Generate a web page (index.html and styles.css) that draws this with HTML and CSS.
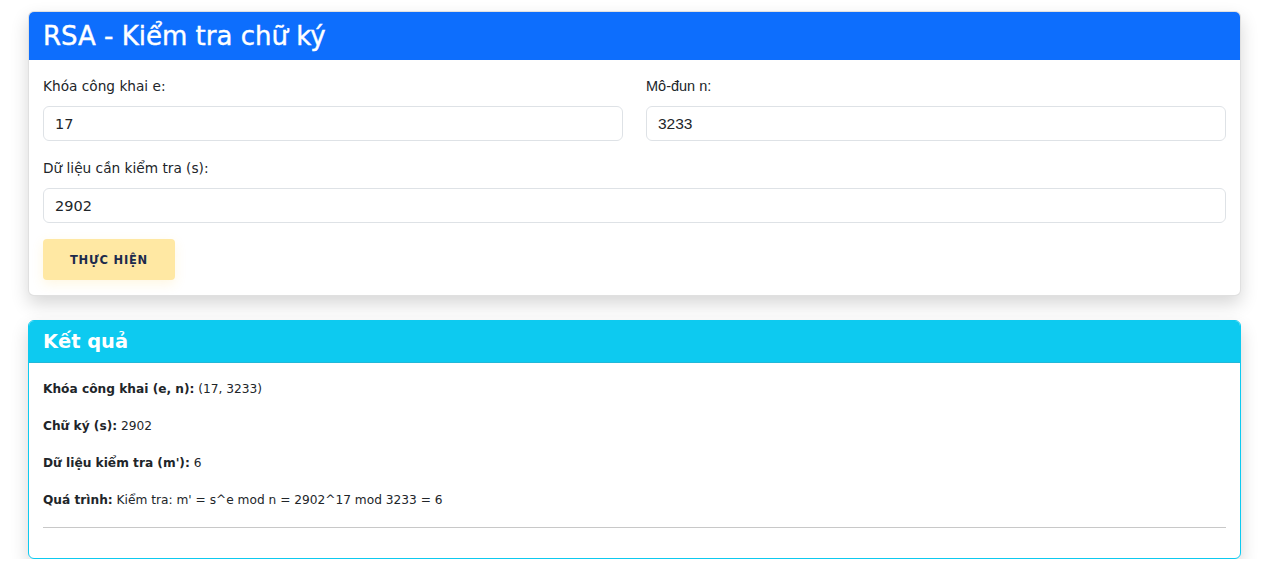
FILE: index.html
```html
<!DOCTYPE html>
<html lang="vi">
<head>
<meta charset="UTF-8">
<meta name="viewport" content="width=device-width, initial-scale=1.0">
<title>RSA - Kiểm tra chữ ký</title>
<link rel="stylesheet" href="styles.css">
</head>
<body>

<div class="container">
    <!-- Form -->
    <div class="card">
        <div class="card-header header-primary">
            <h2>RSA - Kiểm tra chữ ký</h2>
        </div>
        <div class="card-body">
            <div class="row">
                <div class="form-group">
                    <label for="e">Khóa công khai e:</label>
                    <input id="e" type="text" value="17">
                </div>
                <div class="form-group alt-font">
                    <label for="n">Mô-đun n:</label>
                    <input id="n" type="text" value="3233">
                </div>
            </div>
            <div class="form-group">
                <label for="s">Dữ liệu cần kiểm tra (s):</label>
                <input id="s" type="text" value="2902">
            </div>
            <button class="btn-run" type="button">Thực hiện</button>
        </div>
    </div>

    <!-- Result -->
    <div class="card card-info">
        <div class="card-header header-info">
            <h3>Kết quả</h3>
        </div>
        <div class="card-body result">
            <p><strong>Khóa công khai (e, n):</strong> (17, 3233)</p>
            <p><strong>Chữ ký (s):</strong> 2902</p>
            <p><strong>Dữ liệu kiểm tra (m'):</strong> 6</p>
            <p><strong>Quá trình:</strong> Kiểm tra: m' = s^e mod n = 2902^17 mod 3233 = 6</p>
            <hr>
        </div>
    </div>
</div>

</body>
</html>
```

FILE: styles.css
```css
/* Basic Reset */
* {
    margin: 0;
    padding: 0;
    box-sizing: border-box;
}

body {
    background: #fff;
    font-family: "DejaVu Sans", "Open Sans", sans-serif;
    color: #212529;
}

/* Container */
.container {
    margin: 11px 30px 0 28px;
    display: flex;
    flex-direction: column;
    gap: 24px;
}

/* Cards */
.card {
    background: #fff;
    border: 1px solid rgba(0, 0, 0, 0.12);
    border-radius: 6px;
    box-shadow: 0 8px 18px rgba(0, 0, 0, 0.16);
    overflow: hidden;
}

.card-info {
    border-color: #0dcaf0;
}

.card-header {
    color: #fff;
    display: flex;
    align-items: center;
    margin: -1px -1px 0;
    padding: 0 15px;
}

.header-primary {
    background: #0d6efd;
    height: 49px;
}

.header-primary h2 {
    font-size: 26px;
    font-weight: 500;
    -webkit-text-stroke: 0.4px #fff; /* medium weight look */
}

.header-info {
    background: #0dcaf0;
    height: 43px;
    border-bottom: 1px solid #22b8d8;
}

.header-info h3 {
    font-size: 19.4px;
    font-weight: 700;
}

.card-body {
    padding: 16px 14px 15px;
}

/* Form */
.row {
    display: flex;
    gap: 23px;
}

.row .form-group {
    flex: 1;
}

.form-group {
    margin-bottom: 17px;
}

.form-group label {
    display: block;
    font-size: 13.7px;
    line-height: 21px;
    margin-bottom: 9px;
}

.form-group input {
    display: block;
    width: 100%;
    height: 35px;
    padding: 0 11px;
    border: 1px solid #dee2e6;
    border-radius: 6px;
    font-family: inherit;
    font-size: 14.5px;
    color: #212529;
}

.alt-font label {
    font-family: "Liberation Sans", Arial, sans-serif;
    font-size: 14.5px;
}

.alt-font input {
    font-family: "Liberation Sans", Arial, sans-serif;
    font-size: 15.5px;
}

.btn-run {
    margin-top: -1px;
    width: 132px;
    height: 41px;
    background: #ffe8a3;
    border: none;
    border-radius: 4px;
    box-shadow: 0 4px 12px rgba(255, 200, 60, 0.15);
    font-family: inherit;
    font-size: 11.5px;
    font-weight: 700;
    letter-spacing: 0.8px;
    text-transform: uppercase;
    color: #1c2a4c;
}

/* Result */
.result {
    padding-top: 16px;
}

.result p {
    font-size: 12.2px;
    line-height: 21px;
    margin-bottom: 16px;
}

.result strong {
    font-weight: 700;
}

.result hr {
    border: none;
    border-top: 1px solid #c8c8c8;
    margin-bottom: 15px;
}
```
